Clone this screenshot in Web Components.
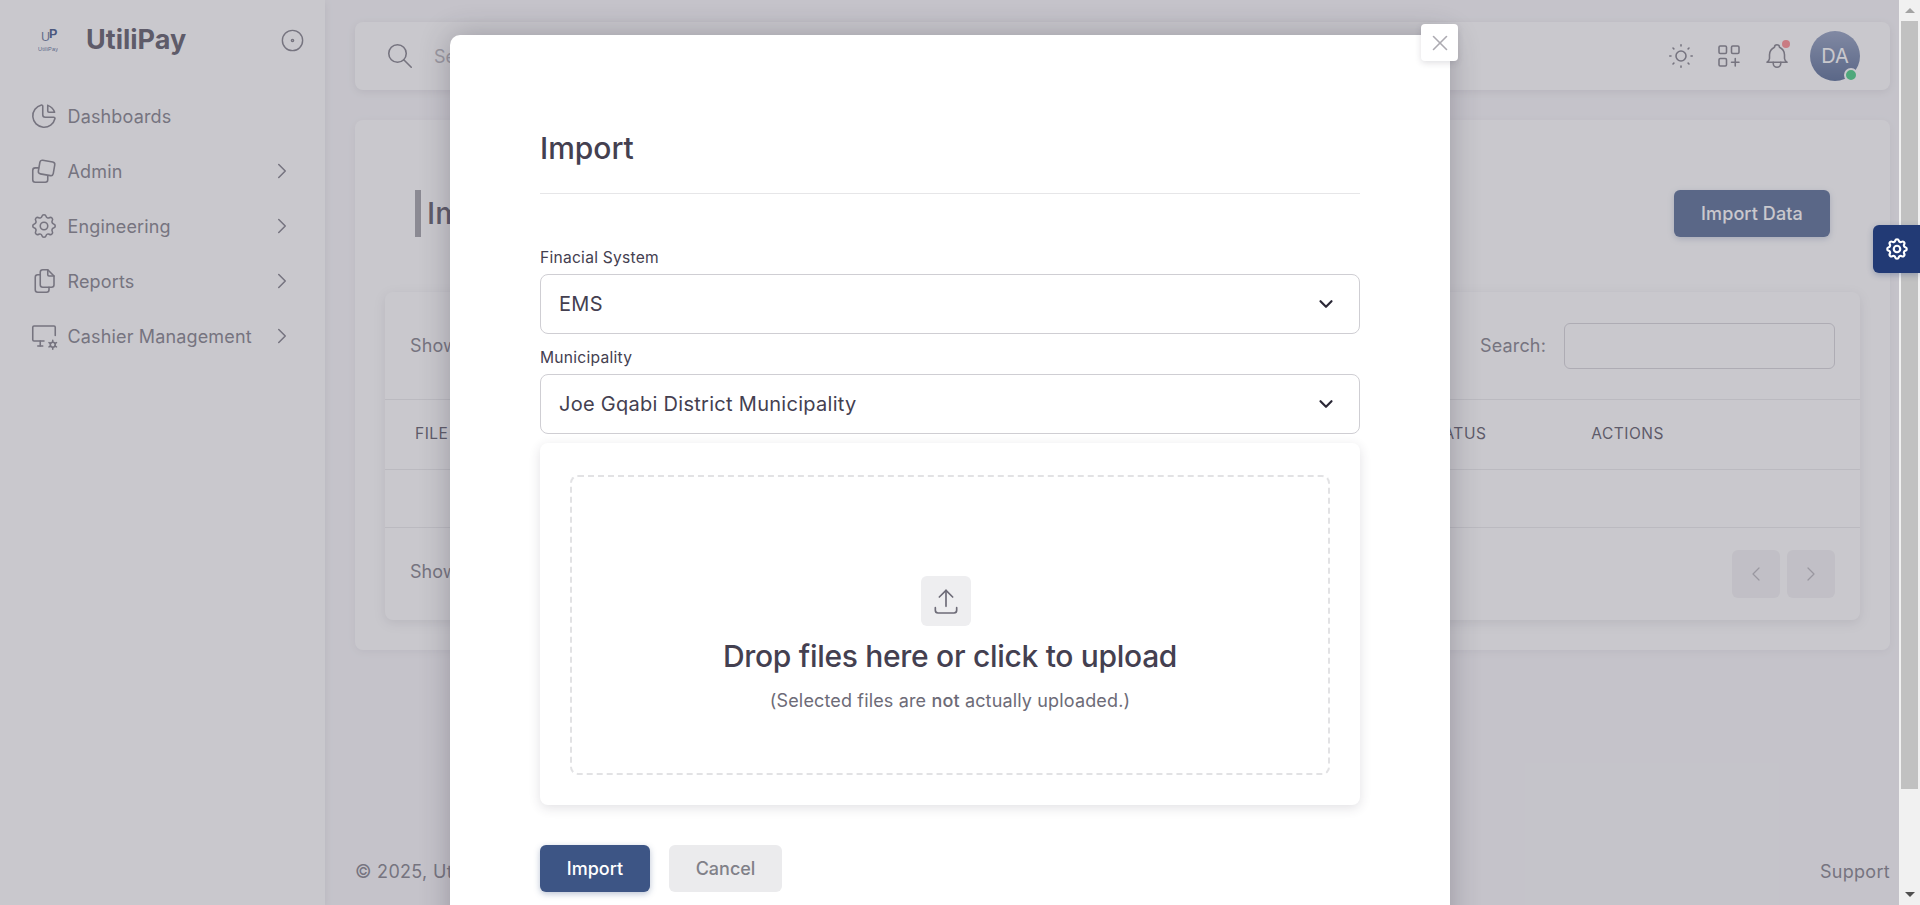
<!DOCTYPE html>
<html lang="en"><head><meta charset="utf-8"><title>UtiliPay</title>
<style>
html,body{margin:0;padding:0;height:905px;overflow:hidden;background:#f8f7fa;font-family:Inter,"Liberation Sans",sans-serif;color:#6d6b77}
</style></head><body>
<app-shell></app-shell>
<script>
const ICONS={
pie:'<path d="M10 3.2a9 9 0 1 0 10.8 10.8a1 1 0 0 0 -1 -1h-6.8a2 2 0 0 1 -2 -2v-7a.9 .9 0 0 0 -1 -.8"/><path d="M15 3.5a9 9 0 0 1 5.5 5.5h-4.5a1 1 0 0 1 -1 -1v-4.5"/>',
cards:'<path d="M11 3.4l8 1.4a2 2 0 0 1 1.6 2.3l-1.2 7a2 2 0 0 1 -2.3 1.6l-8 -1.4a2 2 0 0 1 -1.6 -2.3l1.2 -7a2 2 0 0 1 2.3 -1.6z"/><path d="M7.6 9.5h-2.6a2 2 0 0 0 -2 2v7.5a2 2 0 0 0 2 2h8a2 2 0 0 0 2 -2v-3"/>',
gear:'<path d="M10.325 4.317c.426 -1.756 2.924 -1.756 3.35 0a1.724 1.724 0 0 0 2.573 1.066c1.543 -.94 3.31 .826 2.37 2.37a1.724 1.724 0 0 0 1.065 2.572c1.756 .426 1.756 2.924 0 3.35a1.724 1.724 0 0 0 -1.066 2.573c.94 1.543 -.826 3.31 -2.37 2.37a1.724 1.724 0 0 0 -2.572 1.065c-.426 1.756 -2.924 1.756 -3.35 0a1.724 1.724 0 0 0 -2.573 -1.066c-1.543 .94 -3.31 -.826 -2.37 -2.37a1.724 1.724 0 0 0 -1.065 -2.572c-1.756 -.426 -1.756 -2.924 0 -3.35a1.724 1.724 0 0 0 1.066 -2.573c-.94 -1.543 .826 -3.31 2.37 -2.37c1 .608 2.296 .07 2.572 -1.065z"/><circle cx="12" cy="12" r="3"/>',
files:'<path d="M15 3v4a1 1 0 0 0 1 1h4"/><path d="M18 17h-7a2 2 0 0 1 -2 -2v-10a2 2 0 0 1 2 -2h4l5 5v7a2 2 0 0 1 -2 2z"/><path d="M16 17v2a2 2 0 0 1 -2 2h-7a2 2 0 0 1 -2 -2v-10a2 2 0 0 1 2 -2h2"/>',
desk:'<path d="M12 16h-8a1 1 0 0 1 -1 -1v-10a1 1 0 0 1 1 -1h16a1 1 0 0 1 1 1v6.5"/><path d="M7 20h4"/><path d="M9 16v4"/><circle cx="19" cy="19" r="2"/><path d="M19 15.5v1.5M19 21v1.5M22 17.25l-1.3 .75M17.3 20l-1.3 .75M16 17.25l1.3 .75M20.7 20l1.3 .75"/>',
chev:'<path d="M9 6l6 6l-6 6"/>',
chevl:'<path d="M15 6l-6 6l6 6"/>',
down:'<path d="M6 9l6 6l6 -6"/>',
dot:'<circle cx="12" cy="12" r="1"/><circle cx="12" cy="12" r="9"/>',
search:'<circle cx="10" cy="10" r="7"/><path d="M21 21l-6 -6"/>',
sun:'<circle cx="12" cy="12" r="4"/><path d="M3 12h1m8 -9v1m8 8h1m-9 8v1m-6.4 -15.4l.7 .7m12.1 -.7l-.7 .7m0 11.4l.7 .7m-12.1 -.7l-.7 .7"/>',
grid:'<rect x="4" y="4" width="6" height="6" rx="1"/><rect x="14" y="4" width="6" height="6" rx="1"/><rect x="4" y="14" width="6" height="6" rx="1"/><path d="M14 17h6m-3 -3v6"/>',
bell:'<path d="M10 5a2 2 0 1 1 4 0a7 7 0 0 1 4 6v3a4 4 0 0 0 2 3h-16a4 4 0 0 0 2 -3v-3a7 7 0 0 1 4 -6"/><path d="M9 17v1a3 3 0 0 0 6 0v-1"/>',
upload:'<path d="M4 17v2a2 2 0 0 0 2 2h12a2 2 0 0 0 2 -2v-2"/><path d="M7 9l5 -5l5 5"/><path d="M12 4v12"/>',
x:'<path d="M18 6l-12 12"/><path d="M6 6l12 12"/>'
};
class UiIcon extends HTMLElement{
 connectedCallback(){
  const s=this.getAttribute('size')||24,w=this.getAttribute('stroke')||1.5;
  this.attachShadow({mode:'open'}).innerHTML=`<style>:host{display:inline-flex;flex:none;width:${s}px;height:${s}px}svg{display:block}</style>
  <svg xmlns="http://www.w3.org/2000/svg" width="${s}" height="${s}" viewBox="0 0 24 24" fill="none" stroke="currentColor" stroke-width="${w}" stroke-linecap="round" stroke-linejoin="round">${ICONS[this.getAttribute('name')]}</svg>`;
 }
}
customElements.define('ui-icon',UiIcon);

class NavItem extends HTMLElement{
 connectedCallback(){
  const arrow=this.hasAttribute('arrow');
  this.attachShadow({mode:'open'}).innerHTML=`<style>
  :host{display:flex;align-items:center;height:55px;padding-left:29px;padding-right:30px;font-size:18px;letter-spacing:.15px;color:#6d6b77}
  .t{margin-left:8.5px;flex:1;white-space:nowrap;position:relative;top:1px}
  </style><ui-icon name="${this.getAttribute('icon')}" size="30" stroke="1.25"></ui-icon><span class="t"><slot></slot></span>${arrow?'<ui-icon name="chev" size="26" stroke="1.4"></ui-icon>':''}`;
 }
}
customElements.define('nav-item',NavItem);

class SideNav extends HTMLElement{
 connectedCallback(){
  this.attachShadow({mode:'open'}).innerHTML=`<style>
  :host{display:flex;flex-direction:column;flex:none;width:325px;height:905px;background:#fff;box-shadow:0 2px 8px rgba(47,43,61,.12);box-sizing:border-box}
  .brand{display:flex;align-items:center;height:80px;padding:0 19px 0 38px}
  .logo{flex:none;display:block}
  .name{font-weight:700;font-size:27px;color:#444050;margin-left:28px;flex:1;position:relative;top:-1px}
  .col{color:#6d6b77}
  nav{display:flex;flex-direction:column;margin-top:8px}
  </style>
  <div class="brand"><svg class="logo" width="20" height="26" viewBox="0 0 20 26" font-family="Liberation Sans,sans-serif"><text x="3" y="14" font-size="12.5" fill="#4d5f8c">U<tspan dx="-1" dy="-3" font-weight="700" fill="#223a75">P</tspan></text><text x="0" y="24" font-size="5.6" textLength="20" fill="#3d5585">UtiliPay</text></svg><span class="name">UtiliPay</span><ui-icon class="col" name="dot" size="27" stroke="1.25"></ui-icon></div>
  <nav>
  <nav-item icon="pie">Dashboards</nav-item>
  <nav-item icon="cards" arrow>Admin</nav-item>
  <nav-item icon="gear" arrow>Engineering</nav-item>
  <nav-item icon="files" arrow>Reports</nav-item>
  <nav-item icon="desk" arrow>Cashier Management</nav-item>
  </nav>`;
 }
}
customElements.define('side-nav',SideNav);

class TopBar extends HTMLElement{
 connectedCallback(){
  this.attachShadow({mode:'open'}).innerHTML=`<style>
  :host{display:flex;align-items:center;height:68px;margin-top:22px;background:#fff;border-radius:8px;box-shadow:0 2px 8px rgba(47,43,61,.12);padding:0 30px 0 30px;color:#6d6b77;flex:none}
  .s{margin-left:19px;font-size:18px;color:#acaab1;flex:1}
  .ic{display:inline-flex;margin-right:18px;position:relative}
  .bdg{position:absolute;top:-1px;right:2px;width:8px;height:8px;border-radius:50%;background:#ff4c51;opacity:.75}
  .av{width:50px;height:50px;border-radius:50%;background:linear-gradient(#8090b5,#3d5585);color:#fff;font-size:20px;display:flex;align-items:center;justify-content:center;position:relative}
  .on{position:absolute;right:2px;bottom:-1px;width:10px;height:10px;border-radius:50%;background:#28c76f;border:2px solid #fff}
  </style>
  <ui-icon name="search" size="30" stroke="1.25"></ui-icon><span class="s">Search</span>
  <span class="ic"><ui-icon name="sun" size="30" stroke="1.25"></ui-icon></span>
  <span class="ic"><ui-icon name="grid" size="30" stroke="1.25"></ui-icon></span>
  <span class="ic"><ui-icon name="bell" size="30" stroke="1.25"></ui-icon><span class="bdg"></span></span>
  <div class="av">DA<span class="on"></span></div>`;
 }
}
customElements.define('top-bar',TopBar);

class DataCard extends HTMLElement{
 connectedCallback(){
  this.attachShadow({mode:'open'}).innerHTML=`<style>
  :host{display:block;flex:none;height:530px;box-sizing:border-box;margin-top:30px;padding:70px 30px 30px;background:#fff;border-radius:8px;box-shadow:0 2px 8px rgba(47,43,61,.08)}
  .head{display:flex;align-items:center;justify-content:space-between;height:47px;padding:0 30px}
  h2{margin:0;font-weight:450;font-size:30px;color:#444050;border-left:6px solid #939399;padding-left:6px;height:47px;line-height:47px}
  .btn{background:#3d5585;color:#fff;height:47px;width:156px;border-radius:6px;font-size:18px;font-weight:500;letter-spacing:.1px;display:flex;align-items:center;justify-content:center;box-shadow:0 2px 6px rgba(61,85,133,.3)}
  .inner{margin-top:55px;height:328px;background:#fff;border-radius:8px;box-shadow:0 3px 12px rgba(47,43,61,.14);display:flex;flex-direction:column}
  .tools{height:107px;flex:none;display:flex;align-items:center;justify-content:space-between;padding:0 25px;border-bottom:1px solid #e6e6e8;font-size:18px;letter-spacing:.15px;color:#6d6b77}
  .sr{display:flex;align-items:center;gap:18px}
  .in{width:269px;height:44px;border:1px solid #cfced3;border-radius:6px}
  .th{height:70px;flex:none;display:flex;align-items:center;border-bottom:1px solid #e6e6e8;font-size:15.5px;font-weight:400;letter-spacing:.5px;color:#444050;padding:0 0 3px 30px;box-sizing:border-box}
  .th .a{margin-left:auto}.th .b{margin-left:105px;margin-right:196px}
  .row{height:57px;border-bottom:1px solid #e6e6e8;flex:none}
  .foot{flex:1;display:flex;align-items:center;justify-content:space-between;padding:0 25px;font-size:18px;color:#6d6b77}
  .foot>span:first-child{position:relative;top:-3px}
  .pg{display:flex;gap:7px}
  .pg span{width:48px;height:48px;border-radius:6px;background:#f1f0f2;display:flex;align-items:center;justify-content:center;color:#acaab1}
  </style>
  <div class="head"><h2>Import Data</h2><div class="btn">Import Data</div></div>
  <div class="inner">
   <div class="tools"><span>Show</span><span class="sr">Search:<span class="in"></span></span></div>
   <div class="th"><span>FILE</span><span class="a">STATUS</span><span class="b">ACTIONS</span></div>
   <div class="row"></div>
   <div class="foot"><span>Show</span><span class="pg"><span><ui-icon name="chevl" size="24" stroke="1.25"></ui-icon></span><span><ui-icon name="chev" size="24" stroke="1.25"></ui-icon></span></span></div>
  </div>`;
 }
}
customElements.define('data-card',DataCard);

class SelectField extends HTMLElement{
 connectedCallback(){
  this.attachShadow({mode:'open'}).innerHTML=`<style>
  :host{display:block}
  label{display:block;font-size:15.6px;letter-spacing:.25px;line-height:20px;color:#444050;margin-bottom:7px;position:relative;top:1px}
  .box{height:60px;box-sizing:border-box;border:1px solid #cfced3;border-radius:8px;display:flex;align-items:center;justify-content:space-between;padding:0 22px 0 18px;font-size:20px;letter-spacing:.28px;color:#444050}
  ui-icon{color:#2a2836}
  </style><label>${this.getAttribute('label')}</label><div class="box"><span><slot></slot></span><ui-icon name="down" size="22" stroke="2.4"></ui-icon></div>`;
 }
}
customElements.define('select-field',SelectField);

class FileDrop extends HTMLElement{
 connectedCallback(){
  this.attachShadow({mode:'open'}).innerHTML=`<style>
  :host{display:block;margin-top:9px;height:362px;box-sizing:border-box;padding:32px 30px 30px;background:#fff;border-radius:8px;box-shadow:0 3px 12px rgba(47,43,61,.14)}
  .dash{height:300px;box-sizing:border-box;border:2px dashed #e2e2e4;border-radius:8px;display:flex;flex-direction:column;align-items:center;padding-top:99px}
  .ib{width:50px;height:50px;border-radius:6px;background:#eeeef0;display:flex;align-items:center;justify-content:center;color:#6d6b77;margin-left:-8px}
  .h{font-size:30px;line-height:40px;font-weight:450;letter-spacing:-.3px;color:#444050;margin-top:10px}
  .p{font-size:18px;letter-spacing:.15px;line-height:24px;color:#6d6b77;margin-top:13px}
  b{font-weight:500}
  </style><div class="dash"><div class="ib"><ui-icon name="upload" size="32" stroke="1.25"></ui-icon></div><div class="h">Drop files here or click to upload</div><div class="p">(Selected files are <b>not</b> actually uploaded.)</div></div>`;
 }
}
customElements.define('file-drop',FileDrop);

class ImportModal extends HTMLElement{
 connectedCallback(){
  this.attachShadow({mode:'open'}).innerHTML=`<style>
  :host{display:block;position:absolute;top:35px;left:450px;width:1000px;height:960px;box-sizing:border-box;padding:90px 90px 0;background:#fff;border-radius:10px;box-shadow:0 0 30px rgba(47,43,61,.3)}
  .close{position:absolute;top:-11px;right:-8px;width:37px;height:37px;background:#fff;border-radius:4px;display:flex;align-items:center;justify-content:center;color:#acaab1;box-shadow:0 2px 6px rgba(47,43,61,.15)}
  h3{margin:0;font-size:30px;line-height:46px;font-weight:450;color:#444050}
  hr{border:0;border-top:1px solid #e6e6e8;margin:22px 0 53px}
  select-field+select-field{margin-top:13px}
  .btns{display:flex;gap:19px;margin-top:40px}
  .b{height:47px;border-radius:6px;font-size:18px;font-weight:500;display:flex;align-items:center;justify-content:center}
  .p{width:110px;background:#3d5585;color:#fff;box-shadow:0 2px 6px rgba(61,85,133,.35)}
  .c{width:113px;background:#ebebed;color:#808088}
  </style>
  <div class="close"><ui-icon name="x" size="26" stroke="1.5"></ui-icon></div>
  <h3>Import</h3><hr>
  <select-field label="Finacial System">EMS</select-field>
  <select-field label="Municipality">Joe Gqabi District Municipality</select-field>
  <file-drop></file-drop>
  <div class="btns"><div class="b p">Import</div><div class="b c">Cancel</div></div>`;
 }
}
customElements.define('import-modal',ImportModal);

class FakeScrollbar extends HTMLElement{
 connectedCallback(){
  this.attachShadow({mode:'open'}).innerHTML=`<style>
  :host{display:flex;flex-direction:column;align-items:center;flex:none;width:21px;height:905px;background:#f1f1f1}
  .ar{height:21px;flex:none;display:flex;align-items:center;justify-content:center;width:100%}
  .u{width:0;height:0;border-left:5px solid transparent;border-right:5px solid transparent;border-bottom:5px solid #a3a3a3}
  .d{width:0;height:0;border-left:5px solid transparent;border-right:5px solid transparent;border-top:5px solid #505050}
  .th{width:17px;height:768px;background:#c1c1c1;flex:none}
  .sp{flex:1}
  </style><div class="ar"><span class="u"></span></div><div class="th"></div><div class="sp"></div><div class="ar"><span class="d"></span></div>`;
 }
}
customElements.define('fake-scrollbar',FakeScrollbar);

class AppShell extends HTMLElement{
 connectedCallback(){
  this.attachShadow({mode:'open'}).innerHTML=`<style>
  :host{display:flex;width:1920px;height:905px;position:relative;overflow:hidden;background:#f8f7fa}
  .page{flex:none;width:1899px;height:905px;display:flex;position:relative;overflow:hidden}
  main{flex:1;display:flex;flex-direction:column;padding:0 9px 0 30px;min-width:0}
  footer{margin-top:auto;height:24px;line-height:24px;padding-bottom:21px;display:flex;justify-content:space-between;font-size:18px;letter-spacing:.3px;color:#6d6b77}
  .back{position:absolute;inset:0;background:rgba(130,128,138,.43)}
  .tab{position:absolute;right:0;top:225px;width:47px;height:48px;background:#223a75;border-radius:6px 0 0 6px;display:flex;align-items:center;justify-content:center;color:#fff;box-shadow:0 2px 6px rgba(34,58,117,.3)}
  </style>
  <div class="page">
   <side-nav></side-nav>
   <main><top-bar></top-bar><data-card></data-card><footer><span>© 2025, UtiliPay</span><span>Support</span></footer></main>
   <div class="back"></div>
   <import-modal></import-modal>
  </div>
  <fake-scrollbar></fake-scrollbar>
  <div class="tab"><ui-icon name="gear" size="26" stroke="2"></ui-icon></div>`;
 }
}
customElements.define('app-shell',AppShell);
</script>
</body></html>
